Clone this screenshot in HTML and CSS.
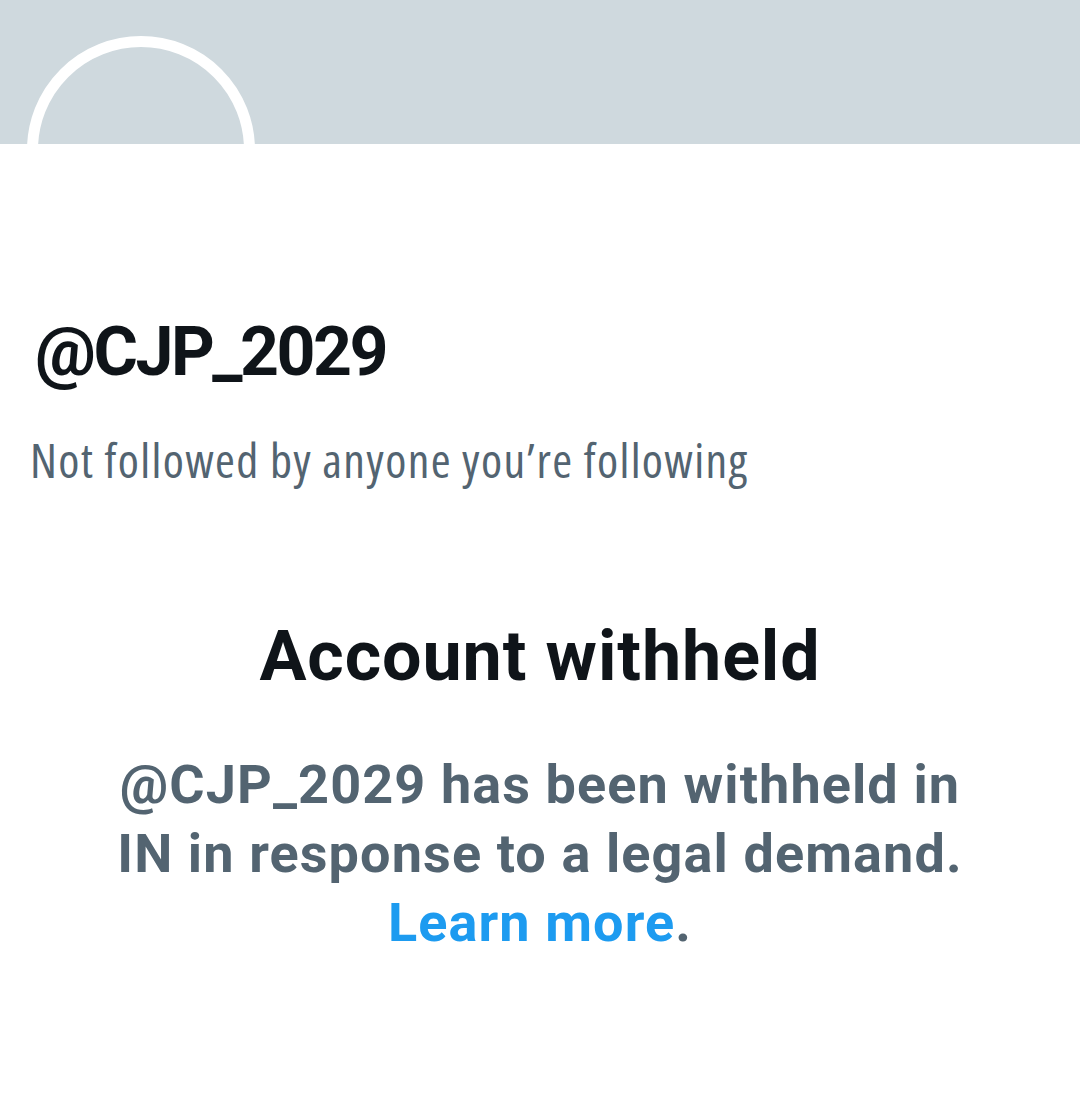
FILE: index.html
```html
<!DOCTYPE html>
<html lang="en">
<head>
<meta charset="utf-8">
<title>@CJP_2029</title>
<link rel="stylesheet" href="styles.css">
</head>
<body>
<div class="page">
  <header class="banner">
    <div class="avatar"></div>
  </header>
  <section class="profile">
    <h1 class="handle">@CJP_2029</h1>
    <p class="followers">Not followed by anyone you’re following</p>
  </section>
  <section class="withheld">
    <h2 class="withheld-title">Account withheld</h2>
    <p class="withheld-text">@CJP_2029 has been withheld in IN in response to a legal demand. <a class="learn" href="#">Learn more</a>.</p>
  </section>
</div>
</body>
</html>
```

FILE: styles.css
```css
* { box-sizing: border-box; }
html, body { margin: 0; padding: 0; background: #ffffff; }
body { font-family: Roboto, "Liberation Sans", sans-serif; color: #0f1419; }
.page { width: 1080px; height: 1112px; overflow: hidden; }
.banner {
  position: relative;
  height: 144px;
  background: #cfd9de;
  overflow: hidden;
}
.avatar {
  position: absolute;
  left: 27px;
  top: 36px;
  width: 228px;
  height: 228px;
  border-radius: 50%;
  border: 11px solid #ffffff;
  background: #cfd9de;
}
.profile { padding: 168px 32px 0 35px; }
.handle {
  margin: 0;
  font-size: 68px;
  line-height: 80px;
  font-weight: 700;
  letter-spacing: -2.5px;
}
.followers {
  margin: 40px 0 0 -5px;
  font-family: "Open Sans", Roboto, sans-serif;
  font-stretch: 75%;
  font-size: 48px;
  line-height: 56px;
  color: #536471;
  letter-spacing: 1.35px;
}
.withheld { padding-top: 128px; display: flex; flex-direction: column; align-items: center; text-align: center; }
.withheld-title {
  margin: 0;
  font-size: 70px;
  line-height: 80px;
  font-weight: 700;
  letter-spacing: 0.9px;
}
.withheld-text {
  margin: 54px 0 0;
  width: 880px;
  font-size: 54px;
  line-height: 69px;
  font-weight: 700;
  color: #536471;
  letter-spacing: 1.1px;
}
.learn { color: #1d9bf0; text-decoration: none; }
```
